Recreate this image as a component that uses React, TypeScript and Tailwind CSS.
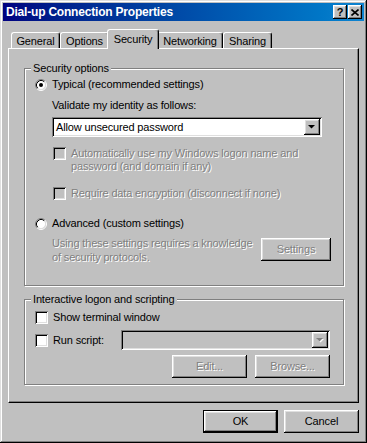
import React from "react";

const RAISED = "shadow-[inset_-1px_-1px_0_#000,inset_1px_1px_0_#fff,inset_-2px_-2px_0_#808080,inset_2px_2px_0_#dfdfdf]";
const SUNKEN = "shadow-[inset_1px_1px_0_#808080,inset_-1px_-1px_0_#fff,inset_2px_2px_0_#000,inset_-2px_-2px_0_#dfdfdf]";
const DIM = "text-[#808080] [text-shadow:1px_1px_0_#fff]";

const Radio = ({checked}: {checked?: boolean}) => (
    <svg width="12" height="12" viewBox="0 0 12 12" className="shrink-0">
        <circle cx="6" cy="6" r="4.5" fill="#fff"/>
        <path d="M2.11 9.89 A5.5 5.5 0 0 1 9.89 2.11" stroke="#808080" fill="none"/>
        <path d="M9.89 2.11 A5.5 5.5 0 0 1 2.11 9.89" stroke="#fff" fill="none"/>
        <path d="M2.82 9.18 A4.5 4.5 0 0 1 9.18 2.82" stroke="#000" fill="none"/>
        <path d="M9.18 2.82 A4.5 4.5 0 0 1 2.82 9.18" stroke="#dfdfdf" fill="none"/>
        {checked && <circle cx="6" cy="6" r="2" fill="#000"/>}
    </svg>
);

const Check = ({disabled}: { disabled?: boolean }) => (
    <div className={`h-[13px] w-[13px] shrink-0 ${disabled ? "bg-[#c0c0c0]" : "bg-white"} ${SUNKEN}`}/>
);

const Arrow = ({disabled}: { disabled?: boolean }) => (
    <div className={`flex h-full w-[16px] items-center justify-center bg-[#c0c0c0] ${RAISED}`}>
        <svg width="8" height="5" viewBox="0 0 8 5">
            {disabled && <path d="M1 1h7L4.5 4.5z" fill="#fff"/>}
            <path d="M0 0h7L3.5 3.5z" fill={disabled ? "#808080" : "#000"}/>
        </svg>
    </div>
);

const Button = ({label, w, disabled, isDefault}: { label: string; w: string; disabled?: boolean; isDefault?: boolean }) => {
    if (isDefault) {
        return (
            <div className={`h-[23px] ${w} border border-black`}>
                <div className={`flex h-full w-full items-center justify-center bg-[#c0c0c0] ${RAISED}`}>{label}</div>
            </div>
        );
    }
    return (
        <div className={`flex h-[23px] ${w} items-center justify-center bg-[#c0c0c0] ${RAISED} ${disabled ? DIM : ""}`}>
            {label}
        </div>
    );
};

const tabs = [
    {name: "General", w: "w-[49px]"},
    {name: "Options", w: "w-[49px]"},
    {name: "Security", w: "w-[48px]", active: true},
    {name: "Networking", w: "w-[66px]"},
    {name: "Sharing", w: "w-[49px]"},
];

const App = () => {
    return (
        <div className="h-[443px] w-[367px] overflow-hidden bg-[#c0c0c0] p-[3px] font-['Liberation_Sans',Arial,sans-serif] text-[11px] leading-[13px] tracking-[-0.15px] text-black shadow-[inset_-1px_-1px_0_#000,inset_1px_1px_0_#dfdfdf,inset_-2px_-2px_0_#808080,inset_2px_2px_0_#fff]">
            {/* title bar */}
            <div className="flex h-[18px] items-center bg-linear-to-r from-[#000080] to-[#1084d0] pl-[3px] pr-[2px]">
                <span className="text-[12px] font-bold tracking-[-0.2px] text-white">Dial-up Connection Properties</span>
                <div className="ml-auto flex gap-[1px]">
                    <div className={`flex h-[14px] w-[14px] items-center justify-center bg-[#c0c0c0] text-[11px] font-bold leading-none ${RAISED}`}>?</div>
                    <div className={`flex h-[14px] w-[14px] items-center justify-center bg-[#c0c0c0] ${RAISED}`}>
                        <svg width="8" height="7" viewBox="0 0 8 7">
                            <path d="M0.5 0.5 L7.5 6.5 M7.5 0.5 L0.5 6.5" stroke="#000" strokeWidth="1.6"/>
                        </svg>
                    </div>
                </div>
            </div>

            <div className="flex flex-col px-[5px] pt-[8px]">
                {/* tabs */}
                <div className="flex h-[20px] items-end pl-[3px]">
                    {tabs.map((t) => (
                        <div key={t.name} className={`${t.w} shrink-0`}>
                            {t.active ? (
                                <div className="relative z-10 -mx-[2px] flex h-[20px] items-start justify-center rounded-t-[3px] border-l border-t border-r border-white border-r-black bg-[#c0c0c0] pt-[3px] shadow-[inset_-1px_0_0_#808080]">
                                    {t.name}
                                </div>
                            ) : (
                                <div className="mb-px flex h-[16px] items-center justify-center rounded-t-[3px] border-l border-t border-r border-white border-r-black pt-px shadow-[inset_-1px_0_0_#808080]">
                                    {t.name}
                                </div>
                            )}
                        </div>
                    ))}
                </div>

                {/* panel */}
                <div className="-mt-px flex h-[355px] flex-col border border-white border-b-black border-r-black bg-[#c0c0c0] pl-[15px] pt-[13px] shadow-[inset_-1px_-1px_0_#808080]">
                    <fieldset className="w-[320px] border border-[#808080] pb-[21px] shadow-[inset_1px_1px_0_#fff,1px_1px_0_#fff]">
                        <legend className="ml-[6px] bg-[#c0c0c0] px-[2px]">Security options</legend>
                        <div className="mt-[3px] flex h-[13px] items-center gap-[5px] pl-[10px]">
                            <Radio checked/>
                            <span>Typical (recommended settings)</span>
                        </div>
                        <div className="mt-[8px] pl-[27px]">Validate my identity as follows:</div>
                        <div className={`ml-[27px] mt-[5px] flex h-[20px] w-[270px] items-stretch bg-white p-[2px] ${SUNKEN}`}>
                            <span className="flex flex-1 items-center pl-[2px]">Allow unsecured password</span>
                            <Arrow/>
                        </div>
                        <div className={`mt-[10px] flex items-start gap-[5px] pl-[28px] ${DIM}`}>
                            <Check disabled/>
                            <span>Automatically use my Windows logon name and<br/>password (and domain if any)</span>
                        </div>
                        <div className={`mt-[14px] flex items-center gap-[5px] pl-[28px] ${DIM}`}>
                            <Check disabled/>
                            <span>Require data encryption (disconnect if none)</span>
                        </div>
                        <div className="mt-[17px] flex h-[13px] items-center gap-[5px] pl-[10px]">
                            <Radio/>
                            <span>Advanced (custom settings)</span>
                        </div>
                        <div className="mt-[6px] flex items-start pl-[27px] pr-[12px]">
                            <p className={`leading-[14px] ${DIM}`}>Using these settings requires a knowledge<br/>of security protocols.</p>
                            <div className="ml-auto mt-[2px]">
                                <Button label="Settings" w="w-[70px]" disabled/>
                            </div>
                        </div>
                    </fieldset>

                    <fieldset className="mt-[7px] w-[320px] border border-[#808080] pb-[6px] shadow-[inset_1px_1px_0_#fff,1px_1px_0_#fff]">
                        <legend className="ml-[6px] bg-[#c0c0c0] px-[2px]">Interactive logon and scripting</legend>
                        <div className="mt-[5px] flex h-[13px] items-center gap-[5px] pl-[10px]">
                            <Check/>
                            <span>Show terminal window</span>
                        </div>
                        <div className="mt-[6px] flex h-[20px] items-center gap-[5px] pl-[10px] pr-[13px]">
                            <Check/>
                            <span>Run script:</span>
                            <div className={`ml-auto flex h-[20px] w-[209px] justify-end bg-[#c0c0c0] p-[2px] ${SUNKEN}`}>
                                <Arrow disabled/>
                            </div>
                        </div>
                        <div className="mt-[5px] flex justify-end gap-[8px] pr-[13px]">
                            <Button label="Edit..." w="w-[75px]" disabled/>
                            <Button label="Browse..." w="w-[75px]" disabled/>
                        </div>
                    </fieldset>
                </div>

                {/* dialog buttons */}
                <div className="mt-[7px] flex justify-end gap-[6px]">
                    <Button label="OK" w="w-[75px]" isDefault/>
                    <Button label="Cancel" w="w-[75px]"/>
                </div>
            </div>
        </div>
    );
};

export default App;
